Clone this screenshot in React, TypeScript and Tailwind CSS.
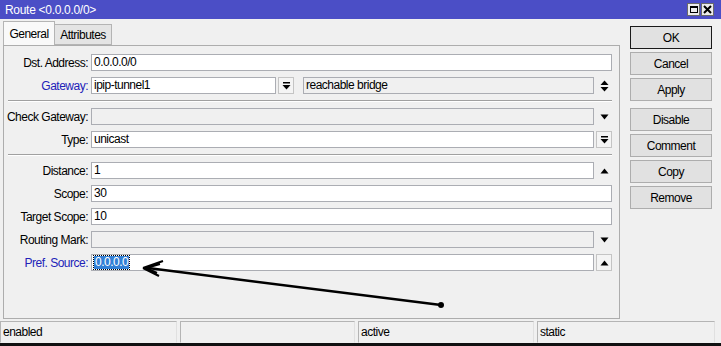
import React from 'react';

const labelBlue = 'text-[#2222b8]';

const DownBar = () => (
    <svg width="9" height="8" viewBox="0 0 9 8">
        <rect x="1" y="0" width="7" height="1.5" fill="#000" />
        <path d="M0.5 3 L8.5 3 L4.5 7.5 Z" fill="#000" />
    </svg>
);

const Down = () => (
    <svg width="9" height="6" viewBox="0 0 9 6">
        <path d="M0.5 0.5 L8.5 0.5 L4.5 5.5 Z" fill="#000" />
    </svg>
);

const Up = () => (
    <svg width="9" height="6" viewBox="0 0 9 6">
        <path d="M0.5 5.5 L8.5 5.5 L4.5 0.5 Z" fill="#000" />
    </svg>
);

const UpDown = () => (
    <svg width="9" height="12" viewBox="0 0 9 12">
        <path d="M0.5 5 L8.5 5 L4.5 0.5 Z" fill="#000" />
        <path d="M0.5 7 L8.5 7 L4.5 11.5 Z" fill="#000" />
    </svg>
);

const Row: React.FC<{ label: string; blue?: boolean; children: React.ReactNode }> = ({ label, blue, children }) => (
    <div className="flex items-center h-[17px]">
        <div className={`w-[84px] text-right whitespace-nowrap ${blue ? labelBlue : 'text-black'}`}>{label}:</div>
        <div className="ml-[3px] flex items-center">{children}</div>
    </div>
);

const Field: React.FC<{ w: string; gray?: boolean; children?: React.ReactNode }> = ({ w, gray, children }) => (
    <div
        className={`${w} h-[17px] border border-[#abadb3] px-[2px] leading-[15px] whitespace-nowrap overflow-hidden ${
            gray ? 'bg-[#f0f0f0]' : 'bg-white'
        }`}
    >
        {children}
    </div>
);

const Side: React.FC<{ children: React.ReactNode }> = ({ children }) => (
    <div className="ml-[2px] w-[16px] h-[17px] flex items-center justify-center">{children}</div>
);

const SmallBtn: React.FC<{ children: React.ReactNode }> = ({ children }) => (
    <div className="w-[16px] h-[17px] border border-[#c4c4c4] bg-[#f4f4f4] flex items-center justify-center">
        {children}
    </div>
);

const Sep = () => <div className="ml-[4px] w-[604px] border-t border-[#a0a0a0] border-b border-b-white" />;

const ActionBtn: React.FC<{ label: string; primary?: boolean }> = ({ label, primary }) => (
    <div
        className={`h-[23px] flex items-center justify-center bg-[#e1e1e1] border ${
            primary ? 'border-[#1a1a1a]' : 'border-[#adadad]'
        }`}
    >
        {label}
    </div>
);

const StatusCell: React.FC<{ w: string; text?: string }> = ({ w, text }) => (
    <div className={`${w} h-full border border-[#b4b4b4] border-b-[#f0f0f0] border-r-[#e0e0e0] px-[2px] flex items-center`}>
        {text}
    </div>
);

export default function App() {
    return (
        <div
            className="w-[721px] h-[346px] bg-[#f0f0f0] flex flex-col relative overflow-hidden text-[12px] tracking-[-0.5px] text-black"
            style={{ fontFamily: '"Liberation Sans", Arial, sans-serif' }}
        >
            {/* title bar */}
            <div className="h-[19px] bg-[#4b4ec6] flex items-center pl-[5px] pr-[7px] text-white tracking-[-0.3px]">
                <span>Route &lt;0.0.0.0/0&gt;</span>
                <div className="ml-auto flex gap-[1px]">
                    <div className="w-[13px] h-[13px] bg-[#ececec] border border-[#6a6a6a] flex items-center justify-center">
                        <div className="w-[8px] h-[7px] border border-black border-t-2" />
                    </div>
                    <div className="w-[13px] h-[13px] bg-[#ececec] border border-[#6a6a6a] flex items-center justify-center">
                        <svg width="9" height="9" viewBox="0 0 9 9">
                            <path d="M1 1 L8 8 M8 1 L1 8" stroke="#000" strokeWidth="2" />
                        </svg>
                    </div>
                </div>
            </div>

            {/* body */}
            <div className="h-[300px] flex">
                <div className="w-[620px] pl-[3px] flex flex-col">
                    <div className="h-[26px] flex items-end">
                        <div className="w-[52px] h-[24px] bg-[#f9f9f9] border border-[#b4b4b4] border-b-0 flex items-center justify-center">
                            General
                        </div>
                        <div className="w-[57px] h-[21px] bg-[#e4e4e4] border border-l-0 border-[#b4b4b4] flex items-center justify-center">
                            Attributes
                        </div>
                    </div>
                    <div className="flex-1 border border-[#adadad] pt-[8px] flex flex-col gap-[6px]">
                        <Row label="Dst. Address">
                            <Field w="w-[521px]">0.0.0.0/0</Field>
                        </Row>
                        <Row label="Gateway" blue>
                            <Field w="w-[185px]">ipip-tunnel1</Field>
                            <div className="ml-[2px]">
                                <SmallBtn>
                                    <DownBar />
                                </SmallBtn>
                            </div>
                            <div className="ml-[9px]">
                                <Field w="w-[291px]" gray>
                                    reachable bridge
                                </Field>
                            </div>
                            <Side>
                                <UpDown />
                            </Side>
                        </Row>
                        <Sep />
                        <Row label="Check Gateway">
                            <Field w="w-[503px]" gray />
                            <Side>
                                <Down />
                            </Side>
                        </Row>
                        <Row label="Type">
                            <Field w="w-[503px]">unicast</Field>
                            <div className="ml-[2px]">
                                <SmallBtn>
                                    <DownBar />
                                </SmallBtn>
                            </div>
                        </Row>
                        <Sep />
                        <Row label="Distance">
                            <Field w="w-[503px]">1</Field>
                            <Side>
                                <Up />
                            </Side>
                        </Row>
                        <Row label="Scope">
                            <Field w="w-[521px]">30</Field>
                        </Row>
                        <Row label="Target Scope">
                            <Field w="w-[521px]">10</Field>
                        </Row>
                        <Row label="Routing Mark">
                            <Field w="w-[503px]" gray />
                            <Side>
                                <Down />
                            </Side>
                        </Row>
                        <Row label="Pref. Source" blue>
                            <Field w="w-[503px]">
                                <span className="inline-block bg-[#3380d6] text-white outline outline-1 outline-dotted outline-black leading-[13px] px-[1px]">
                                    0.0.0.0
                                </span>
                            </Field>
                            <div className="ml-[2px]">
                                <SmallBtn>
                                    <Up />
                                </SmallBtn>
                            </div>
                        </Row>
                    </div>
                </div>

                <div className="ml-[10px] w-[82px] pt-[7px] flex flex-col gap-[3px]">
                    <ActionBtn label="OK" primary />
                    <ActionBtn label="Cancel" />
                    <ActionBtn label="Apply" />
                    <div className="h-[1px]" />
                    <ActionBtn label="Disable" />
                    <ActionBtn label="Comment" />
                    <ActionBtn label="Copy" />
                    <ActionBtn label="Remove" />
                </div>
            </div>

            {/* status bar */}
            <div className="h-[24px] pt-[2px] flex gap-[3px]">
                <StatusCell w="w-[177px]" text="enabled" />
                <StatusCell w="w-[175px]" />
                <StatusCell w="w-[176px]" text="active" />
                <StatusCell w="w-[178px]" text="static" />
            </div>
            <div className="h-[3px] bg-[#111]" />

            {/* annotation arrow */}
            <svg className="absolute left-0 top-0 pointer-events-none" width="721" height="346" viewBox="0 0 721 346">
                <line x1="148" y1="268" x2="441" y2="305" stroke="#000" strokeWidth="2.5" />
                <path d="M143 268 L163 261 M143 268 L159 276 M146 268 L160 264 M146 268 L157 273" stroke="#000" strokeWidth="2" fill="none" />
                <circle cx="441" cy="305" r="3" fill="#000" />
            </svg>
        </div>
    );
}
